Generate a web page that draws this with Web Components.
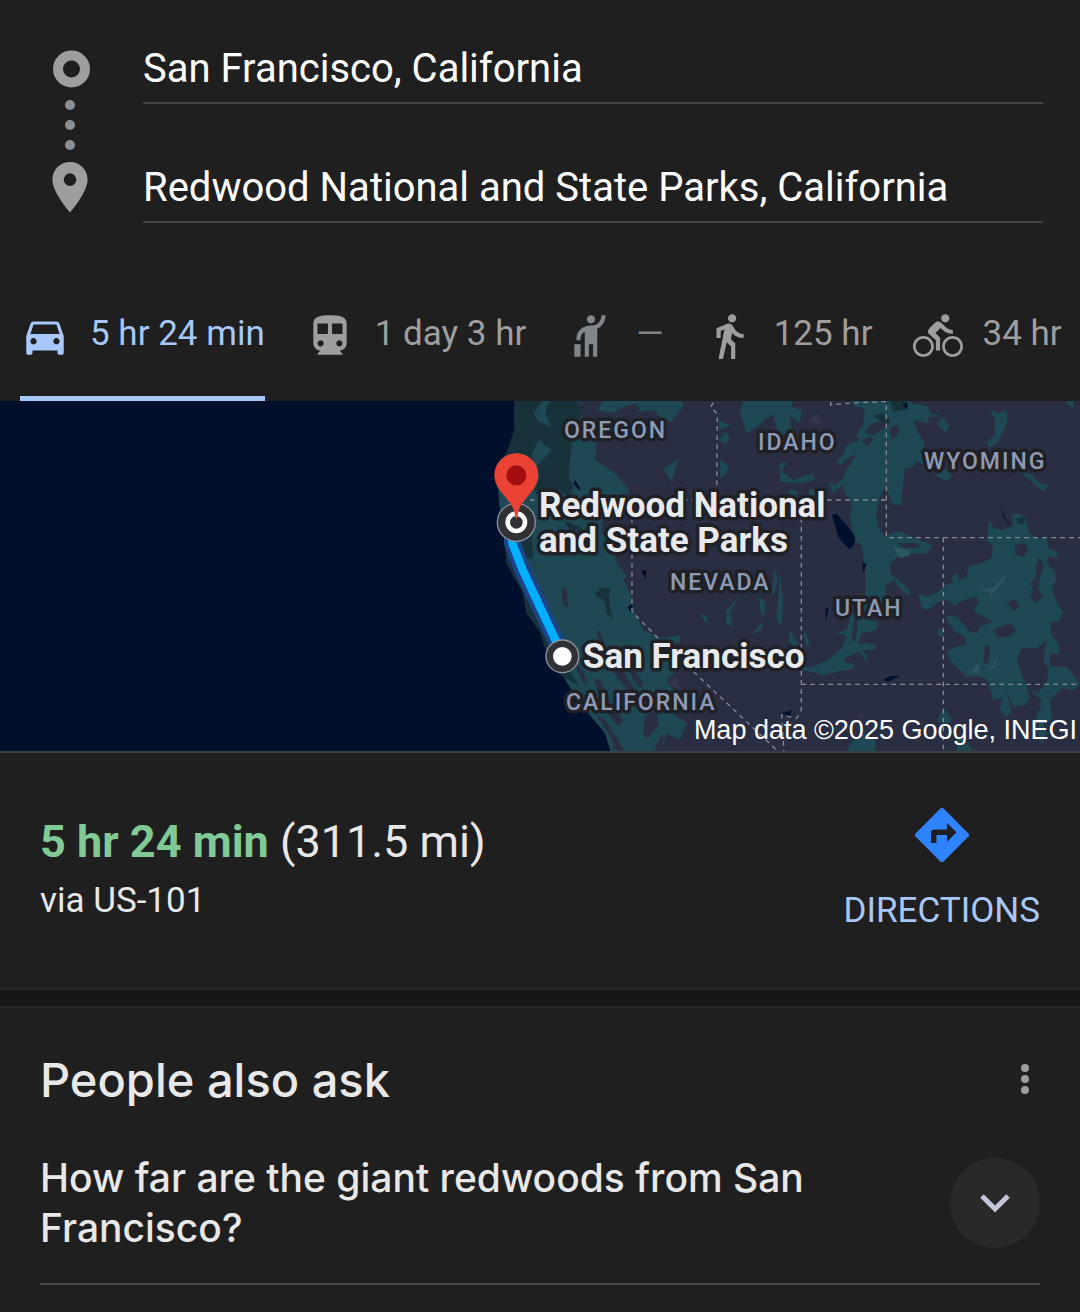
<!DOCTYPE html>
<html lang="en">
<head>
<meta charset="utf-8">
<meta name="viewport" content="width=device-width, initial-scale=1">
<title>San Francisco to Redwood National and State Parks</title>
<style>
  body {
    margin: 0;
    background: #1f1f1f;
    color: #e8e8e8;
    font-family: Roboto, "Liberation Sans", sans-serif;
  }
</style>
</head>
<body>

<route-stops from="San Francisco, California" to="Redwood National and State Parks, California"></route-stops>

<travel-modes>
  <travel-mode icon="car" name="Driving" selected>5 hr 24 min</travel-mode>
  <travel-mode icon="train" name="Transit">1 day 3 hr</travel-mode>
  <travel-mode icon="hail" name="Ride service">—</travel-mode>
  <travel-mode icon="walk" name="Walking">125 hr</travel-mode>
  <travel-mode icon="bike" name="Cycling">34 hr</travel-mode>
</travel-modes>

<route-map></route-map>

<route-summary>
  <span slot="time">5 hr 24 min</span>
  <span slot="distance">(311.5 mi)</span>
  <span slot="via">via US-101</span>
</route-summary>

<ask-panel>
  <span slot="title">People also ask</span>
  <ask-question>How far are the giant redwoods from San Francisco?</ask-question>
</ask-panel>

<script>
// every element here just clones its template into an open shadow root
function makeTemplate(html) {
  const template = document.createElement('template');
  template.innerHTML = html;
  return template;
}

/* ---------- from / to fields ---------- */
const stopsTemplate = makeTemplate(`
  <style>
    :host {
      display: flex;
      gap: 51px;
      padding: 40px 37px 0 52px;
    }
    svg {
      flex: none;
      margin-top: 9px;
    }
    .fields {
      flex: 1;
      min-width: 0;
      display: flex;
      flex-direction: column;
      gap: 55px;
    }
    input {
      box-sizing: border-box;
      display: block;
      width: 100%;
      height: 64px;
      padding: 0 0 6px;
      border: 0;
      border-bottom: 2px solid #464646;
      border-radius: 0;
      outline: 0;
      background: none;
      color: #fff;
      font: inherit;
      font-size: 40px;
    }
  </style>
  <svg width="40" height="164" viewBox="0 0 40 164" aria-hidden="true">
    <circle cx="19.500" cy="20" r="13.500" fill="none" stroke="#9e9e9e" stroke-width="10"/>
    <g fill="#8b9095">
      <circle cx="18" cy="56" r="5"/>
      <circle cx="18" cy="76" r="5"/>
      <circle cx="18" cy="96" r="5"/>
    </g>
    <path fill="#9e9e9e" fill-rule="evenodd" d="M18 113C8.200 113 .4 120.800 .4 130.500 .4 143.500 18 163.500 18 163.500S35.600 143.500 35.600 130.500C35.600 120.800 27.800 113 18 113zm0 11.300a6.300 6.300 0 1 1 0 12.600 6.300 6.300 0 0 1 0-12.600z"/>
  </svg>
  <div class="fields">
    <input id="from" type="text" aria-label="Starting point">
    <input id="to" type="text" aria-label="Destination">
  </div>
`);

class RouteStops extends HTMLElement {
  constructor() {
    super();
    this.attachShadow({ mode: 'open' });
    this.shadowRoot.appendChild(stopsTemplate.content.cloneNode(true));
  }

  connectedCallback() {
    this.shadowRoot.getElementById('from').value = this.getAttribute('from');
    this.shadowRoot.getElementById('to').value = this.getAttribute('to');
  }
}

/* ---------- travel modes ---------- */
const modeIcons = {
  car: 'M18.920 6.010C18.720 5.420 18.160 5 17.500 5h-11c-.66 0-1.210.42-1.420 1.010L3 12v8c0 .55.45 1 1 1h1c.55 0 1-.45 1-1v-1h12v1c0 .55.45 1 1 1h1c.55 0 1-.45 1-1v-8l-2.080-5.990zM6.500 16c-.83 0-1.500-.67-1.500-1.500S5.670 13 6.500 13s1.500.67 1.500 1.500S7.330 16 6.500 16zm11 0c-.83 0-1.500-.67-1.500-1.500s.67-1.500 1.500-1.500 1.500.67 1.500 1.500-.67 1.500-1.500 1.500zM5 11l1.500-4.500h11L19 11H5z',
  train: 'M12 2c-4.420 0-8 .5-8 4v9.500C4 17.430 5.570 19 7.500 19L6 20.500v.5h12v-.5L16.500 19c1.930 0 3.500-1.570 3.500-3.500V6c0-3.500-3.580-4-8-4zM7.500 17c-.83 0-1.500-.67-1.500-1.500S6.670 14 7.500 14s1.500.67 1.500 1.500S8.330 17 7.500 17zm3.500-6H6V6h5v5zm5.500 6c-.83 0-1.500-.67-1.500-1.500s.67-1.500 1.500-1.500 1.500.67 1.500 1.500-.67 1.500-1.500 1.500zm1.500-6h-5V6h5v5z',
  hail: 'M12 6c-1.100 0-2-.9-2-2s.9-2 2-2 2 .9 2 2-.9 2-2 2zm5-4h2v.4c-.2 2.500-1.500 5-4 6.100V22h-2v-6h-2v6H9V10.100c-1.400.5-2 1.700-2 3.900H5v-.5C5 9.500 8 7 12 7c3 0 4.800-1.700 5-5zM4 16h3v6H4z',
  walk: 'M13.500 5.500c1.100 0 2-.9 2-2s-.9-2-2-2-2 .9-2 2 .9 2 2 2zM9.800 8.900L7 23h2.100l1.800-8 2.100 2v6h2v-7.500l-2.100-2 .6-3C14.800 12 16.800 13 19 13v-2c-1.900 0-3.500-1-4.300-2.400l-1-1.600c-.4-.6-1-1-1.700-1-.3 0-.5.1-.8.1L6 8.300V13h2V9.600l1.800-.7',
  bike: 'M15.500 5.500c1.100 0 2-.9 2-2s-.9-2-2-2-2 .9-2 2 .9 2 2 2zM5 12c-2.800 0-5 2.200-5 5s2.200 5 5 5 5-2.200 5-5-2.200-5-5-5zm0 8.700c-2 0-3.700-1.700-3.700-3.700s1.700-3.700 3.700-3.700 3.700 1.700 3.700 3.700-1.700 3.700-3.700 3.700zm5.800-10.200l2.400-2.400.8.8c1.300 1.300 3 2.100 5.100 2.100V9c-1.500 0-2.700-.6-3.600-1.500l-1.900-1.900c-.5-.4-1-.6-1.600-.6s-1.100.2-1.400.6L7.800 8.400c-.4.4-.6.9-.6 1.400 0 .6.2 1.100.6 1.400L11 14v5h2v-6.200l-2.200-2.300zM19 12c-2.800 0-5 2.200-5 5s2.200 5 5 5 5-2.200 5-5-2.200-5-5-5zm0 8.700c-2 0-3.700-1.700-3.700-3.700s1.700-3.700 3.700-3.700 3.700 1.700 3.700 3.700-1.700 3.700-3.700 3.700z'
};

const modesTemplate = makeTemplate(`
  <style>
    :host {
      display: flex;
      gap: 40px;
      padding: 54px 0 0 20px;
      overflow: hidden;
    }
  </style>
  <slot></slot>
`);

class TravelModes extends HTMLElement {
  constructor() {
    super();
    this.attachShadow({ mode: 'open' });
    this.shadowRoot.appendChild(modesTemplate.content.cloneNode(true));
    this.setAttribute('role', 'tablist');
  }
}

const modeTemplate = makeTemplate(`
  <style>
    :host {
      display: block;
      flex: none;
    }
    button {
      box-sizing: border-box;
      display: flex;
      align-items: center;
      gap: 20px;
      height: 124px;
      padding: 0 0 2px;
      border: 0;
      border-bottom: 5px solid transparent;
      background: none;
      color: #9e9e9e;
      font: inherit;
      font-size: 35px;
      line-height: 40px;
      white-space: nowrap;
      cursor: pointer;
    }
    :host([selected]) button {
      color: #a8c7fa;
      border-color: #a8c7fa;
    }
    :host([icon="hail"]) button {
      color: #80868b;
    }
    svg {
      width: 50px;
      height: 50px;
      fill: currentColor;
    }
    span {
      padding-bottom: 4px;
    }
  </style>
  <button type="button" role="tab">
    <svg viewBox="0 0 24 24" aria-hidden="true"><path/></svg>
    <span><slot></slot></span>
  </button>
`);

class TravelMode extends HTMLElement {
  constructor() {
    super();
    this.attachShadow({ mode: 'open' });
    this.shadowRoot.appendChild(modeTemplate.content.cloneNode(true));
  }

  connectedCallback() {
    const button = this.shadowRoot.querySelector('button');
    this.shadowRoot.querySelector('path').setAttribute('d', modeIcons[this.getAttribute('icon')]);
    button.title = this.getAttribute('name');
    button.setAttribute('aria-selected', this.hasAttribute('selected'));
    button.addEventListener('click', () => {
      this.parentElement.querySelectorAll('travel-mode').forEach(mode => {
        mode.toggleAttribute('selected', mode === this);
        mode.shadowRoot.querySelector('button').setAttribute('aria-selected', mode === this);
      });
    });
  }
}

/* ---------- map ---------- */
const mapTemplate = makeTemplate(`
  <style>
    :host {
      display: block;
      background: #000f2c;
      border-bottom: 2px solid #3c4043;
    }
    .map {
      display: block;
      width: 100%;
      height: 350px;
    }
    .forest { fill: #1e4853; }
    .dense { fill: #17323b; }
    .plain { fill: #292e42; }
    .water { fill: #000f2c; }
    .borders {
      fill: none;
      stroke: #858994;
      stroke-width: 4;
      stroke-dasharray: 14 13;
    }
    text {
      paint-order: stroke;
      stroke: #1f2127;
      stroke-width: 7px;
      stroke-linejoin: round;
    }
    .state {
      fill: #8e9ab3;
      font-size: 23px;
      font-weight: 500;
      letter-spacing: 2px;
    }
    .place {
      fill: #e8eaed;
      font-size: 35px;
      font-weight: 700;
    }
    .credit {
      fill: #fff;
      stroke: none;
      font-family: "Liberation Sans", Arial, sans-serif;
      font-size: 27px;
    }
  </style>
  <svg class="map" viewBox="0 0 1080 350" preserveAspectRatio="xMaxYMid slice" role="img" aria-label="Route from San Francisco to Redwood National and State Parks">
    <svg x="480" y="-1" width="600" height="360" viewBox="0 0 1800 1080">
      <!-- land -->
      <path class="plain" d="M104 0V90L80 160 50 210 60 330 75 420 80 490 130 580 140 640 180 695 215 800 250 830 300 910 375 1000 400 1080H1800V0z"/>
      <!-- west coast -->
      <path class="forest" d="M104 0V90L80 160 50 210 60 330 75 420 80 490 130 580 140 640 180 695 215 800 250 830 300 910 375 1000 400 1080H500L510 1010 480 960 450 900 440 850 400 800 360 690 350 700 370 790 400 850 430 930 420 975 385 950 340 900 300 800 290 790 330 890 410 1000 460 1050 500 1053 545 1052 560 1000 600 1020 620 970 570 930 590 880 560 840 600 800 550 745 600 725 600 705 540 715 490 690 465 640 450 580 430 540 440 530 405 480 410 430 365 400 370 330 445 310 445 265 400 215 345 180 350 130 310 80 300 0z"/>
      <path class="forest" d="M370 0L350 30 400 40 430 20 470 35 520 30 550 60 575 65 610 20 605 0zM595 175L550 208 575 245zM715 60L750 75 735 85 718 90zM715 120L735 95 752 115 735 132zM720 180L745 195 740 220 720 235z"/>
      <path class="dense" d="M104 0H190L160 40 175 65 215 80 195 40 210 0H290L310 30 285 90 255 95 275 130 265 230 280 260 270 290 235 270 215 310 180 300 150 250 180 235 170 200 215 150 175 120 155 165 165 210 130 270 100 330 75 420 80 490 130 580 140 640 180 695 215 800 250 830 300 860 260 800 180 660 150 570 120 470 160 475 155 400 100 300 50 210 80 160 104 90z"/>
      <path class="dense" d="M343 582L365 560 392 568 385 590 397 657 380 640 375 605zM250 360L300 380 320 400 270 390z"/>
      <path class="plain" d="M245 560L260 570 265 625 248 615zM430 20L470 10 480 30 440 40z"/>
      <!-- central valley and the sierra gaps -->
      <path class="plain" d="M285 795L305 805 325 855 310 850zM350 690L362 700 385 760 430 810 470 880 455 885 410 830 365 760zM340 835L360 840 385 895 430 960 415 978 370 925zM345 940L375 960 435 1053 405 1050 390 1005zM495 950L530 930 535 975 505 1015 490 1005zM440 790L470 820 490 850 480 865 455 830zM575 900L600 890 640 930 640 980 590 950zM530 1030L550 1000 548 1053 525 1053z"/>
      <!-- nevada ranges -->
      <path class="forest" d="M705 600L680 645 682 675 658 640 678 648zM775 590L750 640 760 680 738 670 740 630zM850 660L815 705 845 690zM840 590L858 610 852 655 840 630zM900 520L910 600 905 680 888 655 895 590zM930 690L955 730 945 740 925 725zM975 690L990 735 980 740 970 705zM885 510L895 540 880 590 875 570zM590 740L640 745 620 760z"/>
      <!-- idaho -->
      <path class="forest" d="M790 0L780 40 800 100 830 80 870 50 900 110 935 90 930 50 960 70 965 30 935 20 940 0zM900 190L920 185 905 215 940 240 1000 220 1005 240 970 250 900 245zM930 270L955 275 950 295 930 290zM1048 245L1065 255 1095 230 1090 255 1055 280zM990 265L1010 275 1000 290 985 285z"/>
      <path class="plain" d="M850 60L880 45 890 80 870 75z"/>
      <!-- wasatch band -->
      <path class="forest" d="M1110 0L1130 20 1155 25 1150 75 1128 105 1140 120 1100 135 1090 165 1068 185 1080 195 1110 170 1130 165 1095 215 1090 270 1115 310 1110 360 1130 425 1145 435 1155 510 1155 600 1165 595 1110 650 1100 690 1065 700 1100 705 1085 745 1050 775 1000 800 965 800 965 810 1030 825 1122 805 1120 790 1090 788 1100 770 1140 755 1162 795 1160 765 1145 750 1185 750 1190 735 1160 728 1135 733 1145 700 1190 690 1195 665 1165 660 1180 650 1220 620 1215 560 1240 540 1270 580 1290 585 1285 565 1230 520 1230 490 1265 460 1340 462 1358 435 1320 420 1260 395 1245 395 1215 410 1195 380 1188 340 1205 280 1215 260 1240 315 1262 315 1275 205 1300 200 1310 180 1330 195 1325 160 1335 130 1315 100 1300 60 1345 70 1345 50 1390 50 1350 40 1345 20 1300 10 1280 0z"/>
      <path class="plain" d="M1155 95L1175 70 1215 65 1218 85 1180 105zM1145 120L1170 110 1180 120 1160 140zM1230 85L1250 75 1260 95 1235 120zM1250 430L1315 430 1320 442 1270 445zM1122 655L1133 660 1128 720 1115 725z"/>
      <path class="dense" d="M1180 45L1205 40 1230 60 1225 75 1200 65zM1230 0L1280 0 1275 30 1240 35z"/>
      <!-- wyoming -->
      <path class="forest" d="M1370 70L1390 52 1408 80 1395 97zM1528 25L1550 40 1580 30 1582 65 1555 125 1530 143 1520 130 1545 100 1545 60zM1360 225L1385 220 1390 205 1405 215 1418 232 1400 242zM1620 215L1650 220 1680 250 1705 255 1690 275 1660 250zM1755 0L1765 15 1780 27 1780 0z"/>
      <!-- rockies -->
      <path class="forest" d="M1525 375L1530 362 1540 385 1570 390 1600 375 1595 345 1615 340 1635 350 1645 390 1650 400 1670 415 1700 415 1705 445 1730 455 1735 475 1705 470 1700 490 1725 515 1728 540 1715 560 1735 620 1750 635 1735 665 1710 665 1715 705 1740 740 1735 762 1710 760 1710 800 1760 800 1800 850 1780 870 1745 865 1710 900 1715 960 1690 970 1700 1000 1685 1035 1670 990 1680 965 1665 965 1680 925 1685 900 1640 860 1650 890 1635 915 1600 920 1580 870 1595 940 1575 950 1560 925 1565 895 1540 900 1525 850 1515 835 1490 830 1460 830 1430 800 1410 780 1400 755 1425 740 1460 735 1455 710 1425 695 1400 660 1400 645 1430 650 1470 695 1490 700 1500 680 1540 665 1490 640 1480 630 1495 610 1490 590 1455 600 1440 605 1430 620 1400 600 1375 605 1345 630 1325 625 1315 580 1340 590 1375 575 1395 555 1420 545 1415 530 1435 520 1435 545 1460 530 1465 500 1500 490 1525 480 1535 470 1540 440 1520 420z"/>
      <path class="plain" d="M1605 435L1635 430 1645 450 1630 470 1605 465zM1680 470L1692 500 1680 530 1675 570 1690 590 1665 610 1650 590 1660 570 1650 550 1670 530 1665 500zM1540 690L1590 670 1610 690 1590 710 1550 710zM1515 735L1530 740 1525 790 1510 790zM1610 780L1625 745 1670 745 1700 720 1690 780 1705 810 1700 850 1670 880 1640 860 1620 810zM1580 605L1605 600 1620 620 1600 635z"/>
      <path class="dense" d="M1608 355L1632 352 1635 370 1615 372z"/>
      <path class="forest" d="M1375 685L1390 690 1388 715 1375 705zM1390 925L1415 955 1410 970 1370 965zM1420 530L1435 520 1435 545 1420 550zM1100 1053L1115 1025 1150 1000 1185 1020 1185 1060 1100 1060zM1430 1060L1430 1010 1450 1015 1485 1060z"/>
      <path fill="#2b5560" d="M1240 440L1290 450 1290 465 1260 475zM1540 560L1580 525 1570 545 1535 585 1545 620 1530 575 1500 570zM1470 815L1500 785 1495 820zM1530 810L1550 775 1545 800 1520 820z"/>
      <path fill="#33364a" d="M980 70L1010 40 1030 70zM1130 955L1145 925 1150 950zM550 860L590 830 600 870 560 850z"/>
      <!-- lakes -->
      <path class="water" d="M1056 345L1070 342 1100 375 1125 410 1122 435 1108 448 1090 430 1075 410zM1147 490L1160 490 1150 520zM1268 15L1283 5 1282 30zM285 240L300 265 298 272 280 250zM484 512L498 510 498 540zM442 622L458 610 455 640zM1565 318L1573 350 1600 385 1570 352zM1036 628L1047 622 1037 665zM1210 840L1230 828 1260 828 1225 845zM905 940L935 930 930 950z"/>
      <g class="borders">
        <path d="M700 8L692 20 712 42 710 300"/>
        <path d="M150 300H1219"/>
        <path d="M456 300V635L540 720 900 1060"/>
        <path d="M1052 5V15L1080 12 1130 8 1219 5V413H1800"/>
        <path d="M964 300V930L950 955 905 945 912 1060"/>
        <path d="M1390 413V1060"/>
        <path d="M964 853H1800"/>
      </g>
      <!-- route and its end points -->
      <g fill="none" stroke-linejoin="round">
        <path stroke="#1d4487" stroke-width="50" d="M97 380V430L127 508 236 740"/>
        <path stroke="#00b0ff" stroke-width="25" d="M97 380V430L127 508 236 740"/>
      </g>
      <g fill="#303134" stroke="#8c93a3" stroke-width="4">
        <circle cx="109" cy="367" r="57"/>
        <circle cx="247" cy="769" r="49"/>
      </g>
      <circle cx="109" cy="367" r="26" fill="none" stroke="#fff" stroke-width="14"/>
      <circle cx="247" cy="769" r="28" fill="#fff"/>
      <path fill="#ea4335" d="M109 160C72 160 43 189 43 226 43 277 101 297 105 348 105 358 113 358 113 348 117 297 175 277 175 226 175 189 146 160 109 160z"/>
      <circle cx="109" cy="226" r="30" fill="#a50e0e"/>
    </svg>
    <text class="state" x="564" y="37">OREGON</text>
    <text class="state" x="758" y="49">IDAHO</text>
    <text class="state" x="924" y="68">WYOMING</text>
    <text class="state" x="670" y="189">NEVADA</text>
    <text class="state" x="835" y="215">UTAH</text>
    <text class="state" x="566" y="309">CALIFORNIA</text>
    <text class="place" x="539" y="116">Redwood National</text>
    <text class="place" x="539" y="151">and State Parks</text>
    <text class="place" x="583" y="267">San Francisco</text>
    <text class="credit" x="1077" y="338" text-anchor="end">Map data ©2025 Google, INEGI</text>
  </svg>
`);

class RouteMap extends HTMLElement {
  constructor() {
    super();
    this.attachShadow({ mode: 'open' });
    this.shadowRoot.appendChild(mapTemplate.content.cloneNode(true));
  }
}

/* ---------- summary ---------- */
const summaryTemplate = makeTemplate(`
  <style>
    :host {
      display: flex;
      justify-content: space-between;
      align-items: flex-start;
      padding: 55px 40px 59px;
    }
    p {
      margin: 0;
    }
    .total {
      padding-top: 8px;
      font-size: 45px;
      line-height: 52px;
    }
    .time {
      color: #81c995;
      font-weight: 700;
    }
    .via {
      padding-top: 13px;
      font-size: 35px;
      line-height: 40px;
    }
    a {
      display: flex;
      flex-direction: column;
      align-items: center;
      gap: 29px;
      color: #a8c7fa;
      font-size: 35px;
      line-height: 40px;
      text-decoration: none;
    }
  </style>
  <div>
    <p class="total"><span class="time"><slot name="time"></slot></span> <slot name="distance"></slot></p>
    <p class="via"><slot name="via"></slot></p>
  </div>
  <a href="#directions">
    <svg width="54" height="54" viewBox="0 0 54 54" aria-hidden="true">
      <path fill="#3083ff" fill-rule="evenodd" d="M25.200.8a2.500 2.500 0 0 1 3.600 0L53.200 25.200a2.500 2.500 0 0 1 0 3.600L28.800 53.200a2.500 2.500 0 0 1-3.600 0L.8 28.800a2.500 2.500 0 0 1 0-3.600zM32 15v6.500H19a3 3 0 0 0-3 3V35h5.500v-8H32v6.700l9.500-9.400z"/>
    </svg>
    DIRECTIONS
  </a>
`);

class RouteSummary extends HTMLElement {
  constructor() {
    super();
    this.attachShadow({ mode: 'open' });
    this.shadowRoot.appendChild(summaryTemplate.content.cloneNode(true));
  }
}

/* ---------- people also ask ---------- */
const askTemplate = makeTemplate(`
  <style>
    :host {
      display: block;
      border-top: 16px solid #171717;
      box-shadow: 0 -2px #23272a;
      font-family: Inter, Roboto, sans-serif;
    }
    section {
      padding: 40px 40px 0;
      border-top: 2px solid #23272a;
    }
    header {
      display: flex;
      justify-content: space-between;
      align-items: center;
      margin-bottom: 41px;
    }
    h2 {
      margin: 0;
      font-size: 47px;
      line-height: 64px;
      font-weight: 500;
    }
    button {
      display: flex;
      padding: 0;
      border: 0;
      background: none;
      cursor: pointer;
    }
  </style>
  <section>
    <header>
      <h2><slot name="title"></slot></h2>
      <button type="button" aria-label="More options">
        <svg width="30" height="40" viewBox="0 0 30 40" fill="#9e9e9e" aria-hidden="true">
          <circle cx="15" cy="8" r="4"/>
          <circle cx="15" cy="19" r="4"/>
          <circle cx="15" cy="30" r="4"/>
        </svg>
      </button>
    </header>
    <slot></slot>
  </section>
`);

class AskPanel extends HTMLElement {
  constructor() {
    super();
    this.attachShadow({ mode: 'open' });
    this.shadowRoot.appendChild(askTemplate.content.cloneNode(true));
  }
}

const questionTemplate = makeTemplate(`
  <style>
    :host {
      display: block;
      border-bottom: 2px solid #464646;
    }
    button {
      display: flex;
      justify-content: space-between;
      align-items: center;
      gap: 120px;
      width: 100%;
      padding: 0 0 30px;
      border: 0;
      background: none;
      color: inherit;
      font: inherit;
      font-size: 39px;
      line-height: 50px;
      font-weight: 500;
      text-align: left;
      cursor: pointer;
    }
    .toggle {
      flex: none;
      display: flex;
      align-items: center;
      justify-content: center;
      width: 90px;
      height: 90px;
      border-radius: 50%;
      background: #292929;
    }
  </style>
  <button type="button" aria-expanded="false">
    <span><slot></slot></span>
    <span class="toggle">
      <svg width="30" height="20" viewBox="0 0 30 20" aria-hidden="true">
        <path d="M2 3L15 16 28 3" fill="none" stroke="#c3c6d9" stroke-width="5"/>
      </svg>
    </span>
  </button>
`);

class AskQuestion extends HTMLElement {
  constructor() {
    super();
    this.attachShadow({ mode: 'open' });
    this.shadowRoot.appendChild(questionTemplate.content.cloneNode(true));
  }
}

window.customElements.define('route-stops', RouteStops);
window.customElements.define('travel-modes', TravelModes);
window.customElements.define('travel-mode', TravelMode);
window.customElements.define('route-map', RouteMap);
window.customElements.define('route-summary', RouteSummary);
window.customElements.define('ask-panel', AskPanel);
window.customElements.define('ask-question', AskQuestion);
</script>
</body>
</html>
